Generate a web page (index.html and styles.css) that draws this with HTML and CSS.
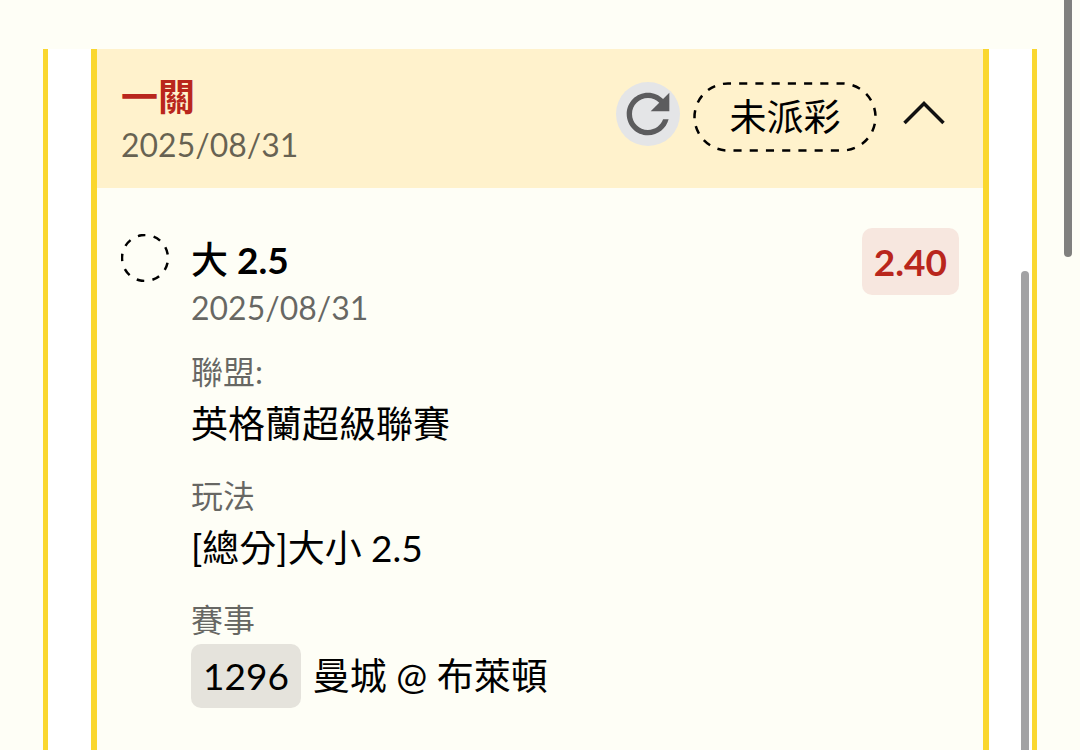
FILE: index.html
```
<!DOCTYPE html>
<html lang="zh-Hant">
<head>
    <meta charset="UTF-8">
    <meta name="viewport" content="width=device-width, initial-scale=1.0">
    <title>一關</title>
    <link rel="stylesheet" href="styles.css">
</head>
<body>
    <main class="panel">
        <section class="ticket">
            <header class="ticket-header">
                <div>
                    <h1 class="ticket-title">一關</h1>
                    <p class="date">2025/08/31</p>
                </div>
                <div class="actions">
                    <button type="button" class="refresh" aria-label="重新整理">
                        <svg viewBox="0 0 24 24" width="64" height="64">
                            <path fill="#5c5c5e" d="M17.65 6.35C16.2 4.9 14.21 4 12 4c-4.42 0-7.99 3.58-7.99 8s3.57 8 7.99 8c3.73 0 6.84-2.55 7.73-6h-2.08c-.82 2.33-3.04 4-5.65 4-3.31 0-6-2.69-6-6s2.69-6 6-6c1.66 0 3.14.69 4.22 1.78L13 11h7V4l-2.35 2.35z"/>
                        </svg>
                    </button>
                    <div class="status">
                        <svg class="status-outline dashed" viewBox="0 0 184 70" aria-hidden="true">
                            <rect x="1.5" y="1.5" width="181" height="67" rx="33.5" pathLength="432" stroke-width="2.5" stroke-dasharray="8 8" stroke-dashoffset="-11"/>
                        </svg>
                        未派彩
                    </div>
                    <button type="button" class="toggle" aria-label="收合">
                        <svg viewBox="0 0 44 24" width="44" height="24">
                            <path d="M2.5 22 22 2.5 41.5 22" fill="none" stroke="#111" stroke-width="3.5"/>
                        </svg>
                    </button>
                </div>
            </header>
            <div class="bet">
                <svg class="bet-state dashed" viewBox="0 0 48 48" aria-hidden="true">
                    <circle cx="24" cy="24" r="23" pathLength="360" stroke-width="2.5" stroke-dasharray="19 21" stroke-dashoffset="-12"/>
                </svg>
                <div class="bet-info">
                    <h2 class="bet-title"><span class="bet-side">大</span> 2.5</h2>
                    <p class="date">2025/08/31</p>
                    <dl class="details">
                        <div class="detail">
                            <dt>聯盟:</dt>
                            <dd>英格蘭超級聯賽</dd>
                        </div>
                        <div class="detail">
                            <dt>玩法</dt>
                            <dd>[總分]大小 2.5</dd>
                        </div>
                        <div class="detail">
                            <dt>賽事</dt>
                            <dd class="match"><span class="match-number">1296</span>曼城 @ 布萊頓</dd>
                        </div>
                    </dl>
                </div>
                <strong class="odds">2.40</strong>
            </div>
        </section>
        <div class="scrollbar panel-scrollbar"></div>
    </main>
    <div class="scrollbar page-scrollbar"></div>
</body>
</html>
```

FILE: styles.css
```
* {
    box-sizing: border-box;
}

body {
    margin: 0;
    height: 100vh;
    overflow: hidden;
    display: flex;
    flex-direction: column;
    padding: 49px 43px 0;
    background-color: #fefef6;
    color: #000;
    font-family: Lato, "Noto Sans CJK TC", sans-serif;
    font-size: 37px;
    line-height: 48px;
}

h1, h2, p, dl, dd {
    margin: 0;
}

button {
    border: none;
    padding: 0;
    background: none;
    cursor: pointer;
}

svg {
    display: block;
}

.panel {
    flex: 1;
    display: flex;
    position: relative;
    padding: 0 43px;
    background-color: #fff;
    border: solid #fad72f;
    border-width: 0 5px;
}

.ticket {
    flex: 1;
    background-color: #fefef6;
    border: solid #fad72f;
    border-width: 0 6px;
}

.ticket-header {
    display: flex;
    align-items: flex-start;
    justify-content: space-between;
    padding: 24px 24px 19px;
    background-color: #fff2cc;
}

.ticket-title {
    color: #b9261c;
    font-size: 37px;
    font-weight: bold;
}

.date {
    color: rgba(0, 0, 0, 0.6);
    font-size: 32px;
}

.actions {
    display: flex;
    align-items: flex-start;
    padding-top: 9px;
}

.refresh {
    width: 64px;
    height: 64px;
    margin-right: 13px;
    border-radius: 50%;
    background-color: #e4e5e7;
}

.status {
    position: relative;
    width: 184px;
    height: 70px;
    line-height: 70px;
    text-align: center;
}

.status-outline {
    position: absolute;
    inset: 0;
}

.dashed {
    fill: none;
    stroke: #000;
}

.toggle {
    display: flex;
    align-items: center;
    justify-content: center;
    width: 70px;
    height: 62px;
    margin-left: 12px;
}

.bet {
    display: flex;
    align-items: flex-start;
    padding: 40px 24px;
}

.bet-state {
    width: 48px;
    height: 48px;
    margin: 6px 22px 0 0;
}

.bet-info {
    flex: 1;
    padding-top: 8px;
}

.bet-title {
    font-size: 37px;
    font-weight: bold;
}

.bet-side {
    font-weight: 500;
}

.details {
    display: flex;
    flex-direction: column;
    gap: 20px;
    margin-top: 16px;
}

.detail dt {
    color: rgba(0, 0, 0, 0.6);
    font-size: 32px;
}

.detail dd {
    line-height: 56px;
}

.detail .match {
    display: flex;
    align-items: center;
    line-height: 64px;
}

.match-number {
    margin-right: 12px;
    padding: 0 12px;
    border-radius: 10px;
    background-color: #e5e3dc;
}

.odds {
    padding: 0 12px;
    border-radius: 10px;
    background-color: #f7e7df;
    color: #b9261c;
    line-height: 67px;
}

.scrollbar {
    position: absolute;
    width: 8px;
    background-color: #a2a2a4;
}

.panel-scrollbar {
    top: 222px;
    right: 3px;
    bottom: 0;
    border-radius: 4px 4px 0 0;
}

.page-scrollbar {
    top: 0;
    right: 8px;
    height: 257px;
    border-radius: 0 0 4px 4px;
    background-color: #80807e;
}
```
